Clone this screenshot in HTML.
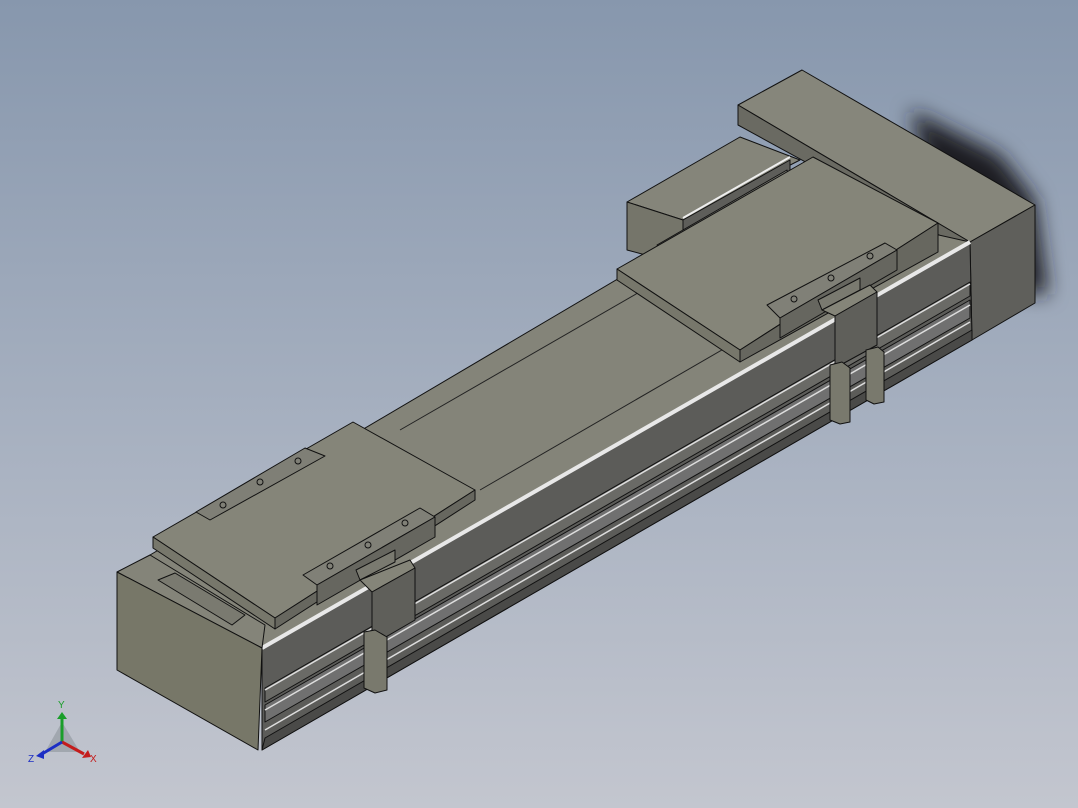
<!DOCTYPE html>
<html><head><style>
html,body{margin:0;padding:0;width:1078px;height:808px;overflow:hidden}
body{background:linear-gradient(180deg,#8797ad 0%,#a5afbf 50%,#c3c6cf 100%);font-family:"Liberation Sans",sans-serif}
svg{position:absolute;left:0;top:0}
</style></head><body>
<svg width="1078" height="808" viewBox="0 0 1078 808" stroke="#111" stroke-width="1" stroke-linejoin="round">
<defs>
<filter id="b" x="-50%" y="-50%" width="200%" height="200%"><feGaussianBlur stdDeviation="10"/></filter>
</defs>
<!-- shadow -->
<polygon points="910,110 1000,155 1035,200 1048,295 1010,290 930,180" fill="#1a1d24" stroke="none" filter="url(#b)"/>
<!-- right end block -->
<polygon points="738,105 802,70 1035,205 970,242" fill="#86867b"/>
<polygon points="970,242 1035,205 1035,303 972,340" fill="#5f5f5b"/>
<polygon points="738,105 970,242 970,252 738,125" fill="#6a6a62"/>
<!-- body top -->
<polygon points="150,555 760,195 970,242 262,648" fill="#848479"/>
<line x1="400" y1="430" x2="820" y2="188" stroke="#222"/>
<line x1="480" y1="490" x2="860" y2="270" stroke="#222"/>
<!-- motor box -->
<polygon points="627,202 740,137 800,160 683,220" fill="#85857a"/>
<polygon points="627,202 683,220 683,265 627,250" fill="#75756a"/>
<polygon points="683,220 790,160 790,185 683,245" fill="#5e5e5a"/>
<line x1="683" y1="218" x2="790" y2="157" stroke="#eee" stroke-width="2"/>
<polygon points="657,245 787,170 788,176 671,253" fill="#83837a"/>
<circle cx="686" cy="238" r="3" fill="none"/><circle cx="723" cy="215" r="3" fill="none"/><circle cx="761" cy="193" r="3" fill="none"/>
<!-- side face -->
<polygon points="262,648 970,242 972,340 262,750" fill="#5c5c59"/>
<polygon points="265,688 970,282 970,296 265,702" fill="#6a6a66"/>
<line x1="265" y1="690" x2="970" y2="284" stroke="#ddd" stroke-width="1.5"/>
<polygon points="265,705 970,300 970,318 265,722" fill="#707070"/>
<line x1="265" y1="710" x2="970" y2="305" stroke="#ddd" stroke-width="1.5"/>
<line x1="265" y1="730" x2="970" y2="322" stroke="#ddd" stroke-width="1.5"/>
<polygon points="265,738 972,330 972,340 262,750" fill="#4a4a48"/>
<line x1="262" y1="648" x2="970" y2="242" stroke="#e8e8e8" stroke-width="4"/>
<!-- left end cap -->
<polygon points="117,572 150,555 265,625 262,648" fill="#848479"/>
<polygon points="158,580 175,573 245,615 232,625" fill="#7a7a70"/>
<polygon points="117,572 262,648 258,750 117,670" fill="#777768"/>
<!-- left carriage -->
<polygon points="153,537 353,422 475,490 275,618" fill="#858579"/>
<polygon points="153,537 275,618 275,629 153,548" fill="#77776b"/>
<polygon points="275,618 475,490 475,500 275,629" fill="#67675f"/>
<polygon points="196,512 305,448 325,456 210,520" fill="#7f7f76"/>
<circle cx="223" cy="505" r="3" fill="none"/><circle cx="260" cy="482" r="3" fill="none"/><circle cx="298" cy="461" r="3" fill="none"/>
<polygon points="303,575 420,508 435,517 317,585" fill="#808077"/>
<polygon points="317,585 435,517 435,537 317,605" fill="#66665f"/>
<circle cx="330" cy="566" r="3" fill="none"/><circle cx="368" cy="545" r="3" fill="none"/><circle cx="405" cy="523" r="3" fill="none"/>
<!-- left bracket -->
<polygon points="356,570 395,550 395,562 360,580" fill="#7a7a70"/>
<polygon points="360,580 410,560 415,568 372,592" fill="#858579"/>
<polygon points="372,592 415,568 415,620 372,645" fill="#5f5f5a"/>
<polygon points="364,632 375,630 387,637 387,690 375,693 364,688" fill="#79796d"/>
<!-- right carriage -->
<polygon points="617,269 813,157 938,223 740,350" fill="#858579"/>
<polygon points="617,269 740,350 740,362 617,280" fill="#77776b"/>
<polygon points="740,350 938,223 938,252 740,362" fill="#67675f"/>
<polygon points="767,305 885,243 897,250 780,318" fill="#808077"/>
<polygon points="780,318 897,250 897,270 780,338" fill="#66665f"/>
<circle cx="794" cy="299" r="3" fill="none"/><circle cx="831" cy="278" r="3" fill="none"/><circle cx="870" cy="256" r="3" fill="none"/>
<!-- right bracket -->
<polygon points="818,300 860,278 860,290 822,310" fill="#7a7a70"/>
<polygon points="822,310 870,285 877,292 835,316" fill="#858579"/>
<polygon points="835,316 877,292 877,345 835,368" fill="#5f5f5a"/>
<polygon points="830,365 842,362 850,368 850,422 840,424 830,420" fill="#79796d"/>
<polygon points="866,350 878,347 884,352 884,402 874,404 866,400" fill="#79796d"/>
<!-- axis triad -->
<g stroke="none">
<polygon points="45,752 62,722 80,752" fill="#9aa0a8" opacity="0.8"/>
<line x1="62" y1="742" x2="62" y2="718" stroke="#1a9e2a" stroke-width="3"/>
<polygon points="57,719 67,719 62,712" fill="#1a9e2a"/>
<line x1="62" y1="742" x2="84" y2="754" stroke="#c41c1c" stroke-width="3"/>
<polygon points="82,758 88,750 91,757" fill="#c41c1c"/>
<line x1="62" y1="742" x2="42" y2="754" stroke="#1c2ec4" stroke-width="3"/>
<polygon points="36,756 44,750 44,759" fill="#1c2ec4"/>
<text x="58" y="708" font-size="10" fill="#1a9e2a">Y</text>
<text x="90" y="762" font-size="10" fill="#c41c1c">X</text>
<text x="28" y="762" font-size="10" fill="#1c2ec4">Z</text>
</g>
</svg>
</body></html>
